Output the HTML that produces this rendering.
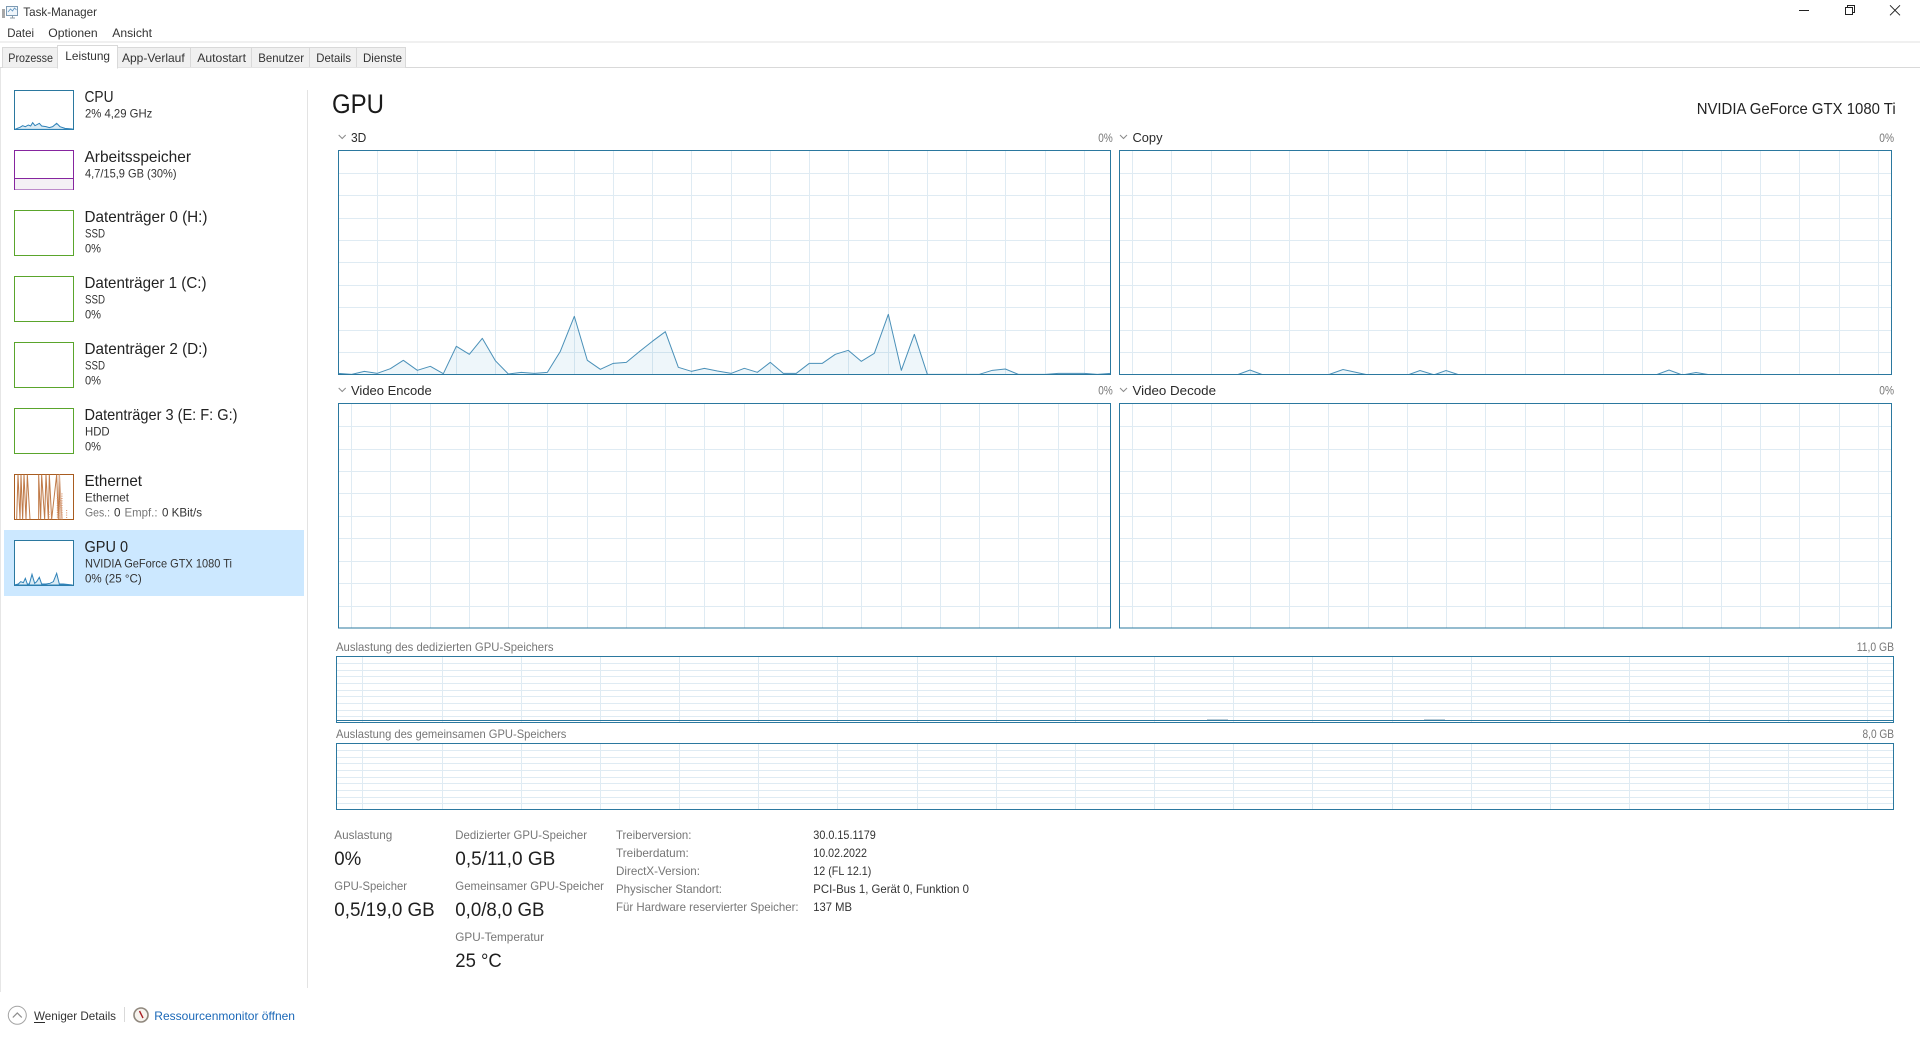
<!DOCTYPE html>
<html><head><meta charset="utf-8"><title>Task-Manager</title>
<style>
html,body{margin:0;padding:0;background:#fff;overflow:hidden}
svg{display:block}
text{font-family:"Liberation Sans",sans-serif;font-size:12px;fill:#333}
.n{font-size:16px;fill:#222}
.g{fill:#767676}
.h{font-size:13px;fill:#2a2a2a}
.b{font-size:19px;fill:#1f1f1f}
.grid{stroke:#dfebf3;stroke-width:1;fill:none}
.box{fill:none;stroke:#2b789f;stroke-width:1}
.chart{fill:rgba(17,125,187,.07);stroke:#4a90b8;stroke-width:3;stroke-linejoin:round}
.chev{fill:none;stroke:#8a8a8a;stroke-width:1}
</style></head><body>
<svg xmlns="http://www.w3.org/2000/svg" width="1920" height="1040" viewBox="0 0 1920 1040">
<rect width="1920" height="1040" fill="#fff"/>

<!-- title bar -->
<g>
<rect x="2" y="9" width="3" height="9" fill="#a8a8a8"/>
<rect x="6.5" y="6.5" width="11" height="9" fill="#f0f6fb" stroke="#7d9ab3"/>
<path d="M8 12l2.5-3 2 2 2-3 2 2" fill="none" stroke="#5a91bd" stroke-width=".8"/>
<path d="M10 18h5M12.5 16v2" stroke="#8f9ca6" fill="none"/>
</g>
<text x="23.3" y="16" textLength="73.7" lengthAdjust="spacingAndGlyphs">Task-Manager</text>
<path d="M1799 10.5h10" stroke="#222" stroke-width="1" fill="none"/>
<path d="M1845.5 7.5h7v7h-7zM1847.5 7.5v-2h7v7h-2" stroke="#222" fill="none"/>
<path d="M1890 5.3l10 10M1900 5.3l-10 10" stroke="#222" fill="none"/>

<!-- menu -->
<text x="7.3" y="37" textLength="26.7" lengthAdjust="spacingAndGlyphs">Datei</text>
<text x="48.3" y="37" textLength="49.4" lengthAdjust="spacingAndGlyphs">Optionen</text>
<text x="112.3" y="37" textLength="39.7" lengthAdjust="spacingAndGlyphs">Ansicht</text>
<rect x="0" y="41" width="1920" height="2" fill="#f0f0f0"/>

<!-- tabs -->
<rect x="0" y="67" width="1920" height="1" fill="#d9d9d9"/>
<path d="M2.5 67.5V47.5H405.5V67.5" fill="#f0f0f0" stroke="#d9d9d9"/>
<path d="M190.5 47.5V67M251.5 47.5V67M309.5 47.5V67M356.5 47.5V67" stroke="#d9d9d9" fill="none"/>
<path d="M57.5 68V45.5H117.5V68Z" fill="#fff" stroke="#d9d9d9"/>
<rect x="58" y="66" width="59" height="3" fill="#fff"/>
<text x="8.3" y="62" textLength="44.7" lengthAdjust="spacingAndGlyphs">Prozesse</text>
<text x="65.3" y="60" textLength="44.7" lengthAdjust="spacingAndGlyphs">Leistung</text>
<text x="122" y="62" textLength="62.7" lengthAdjust="spacingAndGlyphs">App-Verlauf</text>
<text x="197.3" y="62" textLength="48.7" lengthAdjust="spacingAndGlyphs">Autostart</text>
<text x="258.3" y="62" textLength="45.7" lengthAdjust="spacingAndGlyphs">Benutzer</text>
<text x="316.3" y="62" textLength="34.7" lengthAdjust="spacingAndGlyphs">Details</text>
<text x="363" y="62" textLength="39" lengthAdjust="spacingAndGlyphs">Dienste</text>

<!-- frame edges -->
<rect x="0" y="68" width="1" height="924" fill="#e6e6e6"/>
<rect x="307" y="90" width="1" height="898" fill="#e3e3e3"/>

<!-- sidebar -->
<rect x="4" y="530" width="300" height="66" fill="#cce8ff"/>

<g fill="#fff">
<rect x="14.5" y="90.5" width="59" height="39" stroke="#2b789f"/>
<rect x="14.5" y="150.5" width="59" height="39" stroke="#86259f"/>
<rect x="14.5" y="210.5" width="59" height="45" stroke="#5aa52c"/>
<rect x="14.5" y="276.5" width="59" height="45" stroke="#5aa52c"/>
<rect x="14.5" y="342.5" width="59" height="45" stroke="#5aa52c"/>
<rect x="14.5" y="408.5" width="59" height="45" stroke="#5aa52c"/>
<rect x="14.5" y="474.5" width="59" height="45" stroke="#a85c20"/>
<rect x="14.5" y="540.5" width="59" height="45" stroke="#2b789f"/>
</g>
<rect x="15" y="178.5" width="58" height="11" fill="#f4f0f5"/>
<path d="M15 178.5h58" stroke="#86259f" fill="none"/>

<!-- CPU thumb -->
<g transform="translate(10,85) scale(.3333)">
<path d="M15 133L22 130L30 127L38 122L46 125L55 120L62 123L68 113L75 122L88 115L95 123L108 125L118 128L128 125L140 115L150 125L165 130L187 132V133Z" fill="rgba(17,125,187,.15)" stroke="#2f82b8" stroke-width="3"/>
</g>
<!-- GPU thumb -->
<g transform="translate(10,470) scale(.3333)">
<path d="M13 345L25 342L32 335L40 338L46 325L52 342L58 342L66 313L74 340L80 335L88 322L95 342L108 342L120 340L130 335L140 310L148 342L160 342L188 345Z" fill="rgba(17,125,187,.15)" stroke="#2f82b8" stroke-width="3"/>
</g>
<!-- Ethernet thumb -->
<g transform="translate(10,470) scale(.3333)">
<path d="M20 148L24 14L30 148L33 14L38 148L42 14L48 148L52 14L60 148" fill="none" stroke="#c07a48" stroke-width="3"/>
<path d="M86 148V14L92 148L95 14L104 148L108 14L115 148L118 14L125 148L140 14L145 148L148 14L150 148" fill="none" stroke="#c07a48" stroke-width="3"/>
<path d="M148 14L156 148" fill="none" stroke="#d9ad90" stroke-width="4"/>
<path d="M117 125V148M124 130V148M142 70V148M150 90V148M156 70V148M170 120V148" fill="none" stroke="#d78d63" stroke-width="3" stroke-dasharray="3 4"/>
</g>

<text class="n" x="84.5" y="102" textLength="29" lengthAdjust="spacingAndGlyphs">CPU</text>
<text x="85" y="117.5" textLength="67.3" lengthAdjust="spacingAndGlyphs">2%  4,29 GHz</text>
<text class="n" x="84.5" y="162" textLength="106.5" lengthAdjust="spacingAndGlyphs">Arbeitsspeicher</text>
<text x="85" y="177.5" textLength="91.5" lengthAdjust="spacingAndGlyphs">4,7/15,9 GB (30%)</text>

<text class="n" x="84.5" y="222" textLength="123" lengthAdjust="spacingAndGlyphs">Datenträger 0 (H:)</text>
<text x="85" y="237.5" textLength="20" lengthAdjust="spacingAndGlyphs">SSD</text>
<text x="85" y="252.5" textLength="16" lengthAdjust="spacingAndGlyphs">0%</text>

<text class="n" x="84.5" y="288" textLength="122" lengthAdjust="spacingAndGlyphs">Datenträger 1 (C:)</text>
<text x="85" y="303.5" textLength="20" lengthAdjust="spacingAndGlyphs">SSD</text>
<text x="85" y="318.5" textLength="16" lengthAdjust="spacingAndGlyphs">0%</text>

<text class="n" x="84.5" y="354" textLength="123" lengthAdjust="spacingAndGlyphs">Datenträger 2 (D:)</text>
<text x="85" y="369.5" textLength="20" lengthAdjust="spacingAndGlyphs">SSD</text>
<text x="85" y="384.5" textLength="16" lengthAdjust="spacingAndGlyphs">0%</text>

<text class="n" x="84.5" y="420" textLength="153" lengthAdjust="spacingAndGlyphs">Datenträger 3 (E: F: G:)</text>
<text x="85" y="435.5" textLength="24.6" lengthAdjust="spacingAndGlyphs">HDD</text>
<text x="85" y="450.5" textLength="16" lengthAdjust="spacingAndGlyphs">0%</text>

<text class="n" x="84.5" y="486" textLength="57.5" lengthAdjust="spacingAndGlyphs">Ethernet</text>
<text x="85" y="501.5" textLength="44" lengthAdjust="spacingAndGlyphs">Ethernet</text>
<text x="85" y="516.5" class="g" textLength="25" lengthAdjust="spacingAndGlyphs">Ges.:</text>
<text x="114" y="516.5" textLength="6.5" lengthAdjust="spacingAndGlyphs">0</text>
<text x="124.5" y="516.5" class="g" textLength="33" lengthAdjust="spacingAndGlyphs">Empf.:</text>
<text x="162" y="516.5" textLength="40" lengthAdjust="spacingAndGlyphs">0 KBit/s</text>

<text class="n" x="84.5" y="552" textLength="43.5" lengthAdjust="spacingAndGlyphs">GPU 0</text>
<text x="85" y="567.5" textLength="147" lengthAdjust="spacingAndGlyphs">NVIDIA GeForce GTX 1080 Ti</text>
<text x="85" y="582.5" textLength="56.7" lengthAdjust="spacingAndGlyphs">0%  (25 °C)</text>

<!-- heading -->
<text x="332" y="113" style="font-size:27px;fill:#1a1a1a" textLength="52" lengthAdjust="spacingAndGlyphs">GPU</text>
<text x="1696.7" y="114" class="n" textLength="199" lengthAdjust="spacingAndGlyphs">NVIDIA GeForce GTX 1080 Ti</text>

<!-- engine labels -->
<path class="chev" d="M338.7 135l3.5 3.5 3.5-3.5M1120 135l3.5 3.5 3.5-3.5M338.7 388l3.5 3.5 3.5-3.5M1120 388l3.5 3.5 3.5-3.5"/>
<text class="h" x="351" y="142" textLength="15.3" lengthAdjust="spacingAndGlyphs">3D</text>
<text class="h" x="1132.5" y="142" textLength="30" lengthAdjust="spacingAndGlyphs">Copy</text>
<text class="h" x="351" y="395" textLength="80.7" lengthAdjust="spacingAndGlyphs">Video Encode</text>
<text class="h" x="1132.5" y="395" textLength="83.5" lengthAdjust="spacingAndGlyphs">Video Decode</text>
<text class="g" x="1098.3" y="142" textLength="14.4" lengthAdjust="spacingAndGlyphs">0%</text>
<text class="g" x="1879.3" y="142" textLength="14.7" lengthAdjust="spacingAndGlyphs">0%</text>
<text class="g" x="1098.3" y="394.5" textLength="14.4" lengthAdjust="spacingAndGlyphs">0%</text>
<text class="g" x="1879.3" y="394.5" textLength="14.7" lengthAdjust="spacingAndGlyphs">0%</text>

<!-- 3D grid -->
<path class="grid" d="M377.5 150V375M417.5 150V375M456.5 150V375M495.5 150V375M534.5 150V375M574.5 150V375M613.5 150V375M652.5 150V375M691.5 150V375M731.5 150V375M770.5 150V375M809.5 150V375M848.5 150V375M888.5 150V375M927.5 150V375M966.5 150V375M1005.5 150V375M1045.5 150V375M1084.5 150V375
M338 173.5H1111M338 195.5H1111M338 218.5H1111M338 240.5H1111M338 262.5H1111M338 285.5H1111M338 307.5H1111M338 330.5H1111M338 352.5H1111"/>
<!-- Copy grid -->
<path class="grid" d="M1132.5 150V375M1171.5 150V375M1211.5 150V375M1250.5 150V375M1289.5 150V375M1328.5 150V375M1368.5 150V375M1407.5 150V375M1446.5 150V375M1485.5 150V375M1525.5 150V375M1564.5 150V375M1603.5 150V375M1642.5 150V375M1682.5 150V375M1721.5 150V375M1760.5 150V375M1799.5 150V375M1839.5 150V375M1878.5 150V375
M1119 173.5H1892M1119 195.5H1892M1119 218.5H1892M1119 240.5H1892M1119 262.5H1892M1119 285.5H1892M1119 307.5H1892M1119 330.5H1892M1119 352.5H1892"/>
<!-- Video Encode grid -->
<path class="grid" d="M351.5 403V628M390.5 403V628M430.5 403V628M469.5 403V628M508.5 403V628M547.5 403V628M587.5 403V628M626.5 403V628M665.5 403V628M704.5 403V628M744.5 403V628M783.5 403V628M822.5 403V628M861.5 403V628M901.5 403V628M940.5 403V628M979.5 403V628M1018.5 403V628M1058.5 403V628M1097.5 403V628
M338 426.5H1111M338 449.5H1111M338 471.5H1111M338 493.5H1111M338 516.5H1111M338 538.5H1111M338 561.5H1111M338 583.5H1111M338 606.5H1111"/>
<!-- Video Decode grid -->
<path class="grid" d="M1132.5 403V628M1171.5 403V628M1211.5 403V628M1250.5 403V628M1289.5 403V628M1328.5 403V628M1368.5 403V628M1407.5 403V628M1446.5 403V628M1485.5 403V628M1525.5 403V628M1564.5 403V628M1603.5 403V628M1642.5 403V628M1682.5 403V628M1721.5 403V628M1760.5 403V628M1799.5 403V628M1839.5 403V628M1878.5 403V628
M1119 426.5H1892M1119 449.5H1892M1119 471.5H1892M1119 493.5H1892M1119 516.5H1892M1119 538.5H1892M1119 561.5H1892M1119 583.5H1892M1119 606.5H1892"/>

<!-- 3D data -->
<g transform="translate(320,80) scale(.33333)">
<path class="chart" d="M55 880L95 883L133 874L172 880L211 866L250 841L292 871L331 859L370 881L409 799L448 823L487 775L526 842L565 882L604 877L643 880L682 877L721 814L763 709L802 841L841 868L880 850L919 847L958 815L997 784L1036 755L1075 862L1114 874L1153 865L1192 873L1234 880L1273 865L1312 877L1351 847L1390 880L1429 880L1468 850V884H55Z" style="stroke:none"/>
<path d="M55 880L95 883L133 874L172 880L211 866L250 841L292 871L331 859L370 881L409 799L448 823L487 775L526 842L565 882L604 877L643 880L682 877L721 814L763 709L802 841L841 868L880 850L919 847L958 815L997 784L1036 755L1075 862L1114 874L1153 865L1192 873L1234 880L1273 865L1312 877L1351 847L1390 880L1429 880L1468 850" fill="none" stroke="#4a90b8" stroke-width="3" stroke-linejoin="round"/>
</g>
<g transform="translate(700,250) scale(.33333)">
<path class="chart" d="M328 340L367 340L406 313L445 301L484 334L523 310L565 193L604 361L643 253L682 373L838 373L877 361L916 357L955 373L1036 373L1075 370L1153 370L1192 373L1232 370V374H328Z" style="stroke:none"/>
<path d="M328 340L367 340L406 313L445 301L484 334L523 310L565 193L604 361L643 253L682 373L838 373L877 361L916 357L955 373L1036 373L1075 370L1153 370L1192 373L1232 370" fill="none" stroke="#4a90b8" stroke-width="3" stroke-linejoin="round"/>
</g>
<!-- Copy data -->
<path d="M1238 374.5L1250 370L1262 374.5ZM1329 374.5L1343 369.5L1366 374.5ZM1409 374.5L1420 370.5L1433 374.5ZM1435 374.5L1446 370.5L1458 374.5ZM1657 374.5L1669 370L1681 374.5ZM1685 374.5L1696 372.5L1708 374.5Z" fill="rgba(17,125,187,.07)" stroke="#4a90b8" stroke-width="1"/>

<rect class="box" x="338.5" y="150.5" width="772" height="224"/>
<rect class="box" x="1119.5" y="150.5" width="772" height="224"/>
<rect class="box" x="338.5" y="403.5" width="772" height="224.5"/>
<rect class="box" x="1119.5" y="403.5" width="772" height="224.5"/>

<!-- memory charts -->
<text class="g" x="336" y="651" textLength="217.5" lengthAdjust="spacingAndGlyphs">Auslastung des dedizierten GPU-Speichers</text>
<text class="g" x="1856.8" y="651" textLength="37.2" lengthAdjust="spacingAndGlyphs">11,0 GB</text>
<text class="g" x="336" y="738" textLength="230.4" lengthAdjust="spacingAndGlyphs">Auslastung des gemeinsamen GPU-Speichers</text>
<text class="g" x="1862.5" y="738" textLength="31.5" lengthAdjust="spacingAndGlyphs">8,0 GB</text>

<path class="grid" d="M362.5 656V723M442.5 656V723M521.5 656V723M600.5 656V723M679.5 656V723M758.5 656V723M837.5 656V723M917.5 656V723M996.5 656V723M1075.5 656V723M1154.5 656V723M1233.5 656V723M1312.5 656V723M1392.5 656V723M1471.5 656V723M1550.5 656V723M1629.5 656V723M1709.5 656V723M1788.5 656V723M1867.5 656V723
M336 663.5H1894M336 670.5H1894M336 676.5H1894M336 683.5H1894M336 690.5H1894M336 696.5H1894M336 703.5H1894M336 710.5H1894M336 716.5H1894"/>
<path class="grid" d="M362.5 743V810M442.5 743V810M521.5 743V810M600.5 743V810M679.5 743V810M758.5 743V810M837.5 743V810M917.5 743V810M996.5 743V810M1075.5 743V810M1154.5 743V810M1233.5 743V810M1312.5 743V810M1392.5 743V810M1471.5 743V810M1550.5 743V810M1629.5 743V810M1709.5 743V810M1788.5 743V810M1867.5 743V810
M336 750.5H1894M336 757.5H1894M336 763.5H1894M336 770.5H1894M336 777.5H1894M336 783.5H1894M336 790.5H1894M336 797.5H1894M336 803.5H1894"/>
<path d="M337 720.5H1893" stroke="#2b789f" fill="none"/>
<path d="M1207 719.5h21M1424 719.5h21" stroke="#b7cbd7" fill="none"/>
<rect class="box" x="336.5" y="656.5" width="1557" height="66"/>
<rect class="box" x="336.5" y="743.5" width="1557" height="66"/>

<!-- stats -->
<text class="g" x="334.3" y="839" textLength="58" lengthAdjust="spacingAndGlyphs">Auslastung</text>
<text class="b" x="334.3" y="865" textLength="27" lengthAdjust="spacingAndGlyphs">0%</text>
<text class="g" x="334.3" y="890" textLength="72.7" lengthAdjust="spacingAndGlyphs">GPU-Speicher</text>
<text class="b" x="334.3" y="916" textLength="100.4" lengthAdjust="spacingAndGlyphs">0,5/19,0 GB</text>

<text class="g" x="455.3" y="839" textLength="131.7" lengthAdjust="spacingAndGlyphs">Dedizierter GPU-Speicher</text>
<text class="b" x="455.3" y="865" textLength="100" lengthAdjust="spacingAndGlyphs">0,5/11,0 GB</text>
<text class="g" x="455.3" y="890" textLength="148.7" lengthAdjust="spacingAndGlyphs">Gemeinsamer GPU-Speicher</text>
<text class="b" x="455.3" y="916" textLength="89.2" lengthAdjust="spacingAndGlyphs">0,0/8,0 GB</text>
<text class="g" x="455.3" y="941" textLength="88.7" lengthAdjust="spacingAndGlyphs">GPU-Temperatur</text>
<text class="b" x="455.3" y="967" textLength="46.4" lengthAdjust="spacingAndGlyphs">25 °C</text>

<text class="g" x="616" y="839" textLength="75.4" lengthAdjust="spacingAndGlyphs">Treiberversion:</text>
<text class="g" x="616" y="857" textLength="72.8" lengthAdjust="spacingAndGlyphs">Treiberdatum:</text>
<text class="g" x="616" y="875" textLength="84" lengthAdjust="spacingAndGlyphs">DirectX-Version:</text>
<text class="g" x="616" y="893" textLength="106" lengthAdjust="spacingAndGlyphs">Physischer Standort:</text>
<text class="g" x="616" y="911" textLength="182.6" lengthAdjust="spacingAndGlyphs">Für Hardware reservierter Speicher:</text>
<text x="813.3" y="839" textLength="62.5" lengthAdjust="spacingAndGlyphs">30.0.15.1179</text>
<text x="813.3" y="857" textLength="53.6" lengthAdjust="spacingAndGlyphs">10.02.2022</text>
<text x="813.3" y="875" textLength="58" lengthAdjust="spacingAndGlyphs">12 (FL 12.1)</text>
<text x="813.3" y="893" textLength="155.7" lengthAdjust="spacingAndGlyphs">PCI-Bus 1, Gerät 0, Funktion 0</text>
<text x="813.3" y="911" textLength="38.7" lengthAdjust="spacingAndGlyphs">137 MB</text>

<!-- footer -->
<circle cx="17.3" cy="1015.3" r="9" fill="#fff" stroke="#a3a3a3"/>
<path d="M12.8 1017.5l4.5-4.5 4.5 4.5" fill="none" stroke="#8c8c8c" stroke-width="1.2"/>
<text x="34" y="1020" textLength="82" lengthAdjust="spacingAndGlyphs">Weniger Details</text>
<path d="M34 1022.5h11" stroke="#2b2b2b" fill="none"/>
<rect x="124" y="1007" width="1" height="15" fill="#d9d9d9"/>
<circle cx="141" cy="1015" r="7" fill="#f6f3ee" stroke="#8f877d" stroke-width="1.6"/>
<path d="M139.5 1011l3.5 7" stroke="#a81e24" stroke-width="1.4" fill="none"/>
<text x="154.3" y="1020" style="fill:#1a68b8" textLength="140.7" lengthAdjust="spacingAndGlyphs">Ressourcenmonitor öffnen</text>
</svg>
</body></html>
